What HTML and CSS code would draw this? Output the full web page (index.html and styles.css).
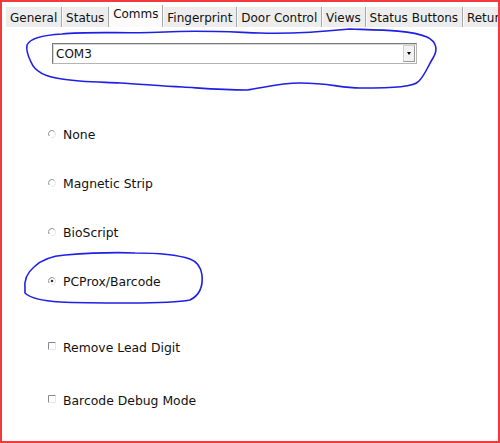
FILE: index.html
```html
<!DOCTYPE html>
<html lang="en">
	<head>
		<meta charset="UTF-8" />
		<title>Comms</title>
		<link rel="stylesheet" href="styles.css">
	</head>
	<body>
		<div class="frame">
			<div class="tabs">
				<div class="tab">General</div>
				<div class="tab">Status</div>
				<div class="tab active">Comms</div>
				<div class="tab">Fingerprint</div>
				<div class="tab">Door Control</div>
				<div class="tab">Views</div>
				<div class="tab">Status Buttons</div>
				<div class="tab last">Return</div>
			</div>

			<div class="content">
				<div class="combo-row">
					<div class="combo">
						<span class="combo-value">COM3</span>
						<span class="combo-btn"><span class="arrow"></span></span>
					</div>
				</div>

				<div class="options">
					<label class="option opt-none">
						<svg class="radio" width="8" height="8" viewBox="0 0 8 8"><path d="M1.2 6 A3 3 0 0 1 6.5 1.8" fill="none" stroke="#8c8c8c" stroke-width="1"/><path d="M6.6 2.2 A3 3 0 0 1 3 7" fill="none" stroke="#e4e4e4" stroke-width="1"/></svg>
						<span>None</span>
					</label>
					<label class="option">
						<svg class="radio" width="8" height="8" viewBox="0 0 8 8"><path d="M1.2 6 A3 3 0 0 1 6.5 1.8" fill="none" stroke="#8c8c8c" stroke-width="1"/><path d="M6.6 2.2 A3 3 0 0 1 3 7" fill="none" stroke="#e4e4e4" stroke-width="1"/></svg>
						<span>Magnetic Strip</span>
					</label>
					<label class="option">
						<svg class="radio" width="8" height="8" viewBox="0 0 8 8"><path d="M1.2 6 A3 3 0 0 1 6.5 1.8" fill="none" stroke="#8c8c8c" stroke-width="1"/><path d="M6.6 2.2 A3 3 0 0 1 3 7" fill="none" stroke="#e4e4e4" stroke-width="1"/></svg>
						<span>BioScript</span>
					</label>
					<label class="option">
						<svg class="radio" width="8" height="8" viewBox="0 0 8 8"><path d="M1.2 6 A3 3 0 0 1 6.5 1.8" fill="none" stroke="#8c8c8c" stroke-width="1"/><path d="M6.6 2.2 A3 3 0 0 1 3 7" fill="none" stroke="#e4e4e4" stroke-width="1"/><circle cx="4" cy="4" r="1.3" fill="#333"/></svg>
						<span>PCProx/Barcode</span>
					</label>
					<label class="option opt-check">
						<svg class="check" width="8" height="8" viewBox="0 0 8 8"><path d="M0.5 7.5 V0.5 H7.5" fill="none" stroke="#8a8a8a" stroke-width="1"/><path d="M7.5 1 V7.5 H1" fill="none" stroke="#e8e8e8" stroke-width="1"/></svg>
						<span>Remove Lead Digit</span>
					</label>
					<label class="option opt-debug">
						<svg class="check" width="8" height="8" viewBox="0 0 8 8"><path d="M0.5 7.5 V0.5 H7.5" fill="none" stroke="#8a8a8a" stroke-width="1"/><path d="M7.5 1 V7.5 H1" fill="none" stroke="#e8e8e8" stroke-width="1"/></svg>
						<span>Barcode Debug Mode</span>
					</label>
				</div>
			</div>

			<!-- hand drawn marks on top of the screenshot -->
			<svg class="marks" width="500" height="443" viewBox="0 0 500 443">
				<path d="M27 45 C30 38 45 35 62 34 C90 31 130 34 165 32 C200 30 230 32 260 33 C290 34 320 32 350 29 C380 30 410 30 427 37 C437 42 438 50 433 58 C428 66 425 75 419 81 C414 87 395 88 360 88 C340 88 330 83 300 83 C280 83 262 88 247 90 C220 90 200 88 183 87 C160 86 140 84 120 83 C100 82 80 82 62 79 C45 77 35 72 31 62 C28 56 26 50 27 45 Z" fill="none" stroke="#1f1fe6" stroke-width="1.6"/>
				<path d="M25 289 C24 280 28 272 34 267 C42 259 52 256 65 255 C90 253 115 252 135 253 C160 253 178 255 190 259 C198 262 201 267 202 275 C203 285 200 295 190 300 C175 303 150 303 130 303 C105 303 80 303 60 302 C45 301 30 298 25 293 Z" fill="none" stroke="#1f1fe6" stroke-width="1.6"/>
			</svg>
		</div>
	</body>
</html>
```

FILE: styles.css
```css
* {
	box-sizing: border-box;
}
body {
	margin: 0;
	font-family: 'DejaVu Sans', sans-serif;
	font-size: 12px;
	color: #111;
	background: #fff;
}
.frame {
	position: relative;
	width: 500px;
	height: 443px;
	border: 2px solid #f23a3a;
	padding: 5px 0 0 4px;
	background: #fff;
	overflow: hidden;
}
.tabs {
	display: flex;
	height: 20px;
	background: #ededed;
	white-space: nowrap;
}
.tab {
	display: flex;
	align-items: center;
	height: 20px;
	padding: 1px 3.8px 0 3px;
	border-right: 1px solid #a8a8a8;
	box-shadow: 1px 0 0 #fafafa;
	margin-right: 1px;
}
.tab:first-child {
	padding-left: 4px;
}
.tab.active {
	background: #fbfbfb;
	margin-top: -2px;
	height: 22px;
	padding-top: 0;
	padding-bottom: 4px;
}
.tab.last {
	border-right: none;
}
.content {
	padding-top: 16px;
}
.combo-row {
	padding-left: 46px;
}
.combo {
	display: flex;
	align-items: center;
	width: 365px;
	height: 21px;
	background: #fff;
	border: 1px solid #b4b4b4;
	border-top-color: #7a7a7a;
	border-left-color: #7a7a7a;
	box-shadow: inset 1px 1px 0 #d8d8d8;
	padding: 0 1px 0 3px;
}
.combo-value {
	flex: 1;
	padding-top: 1px;
}
.combo-btn {
	display: flex;
	align-items: center;
	justify-content: center;
	width: 12px;
	height: 17px;
	background: #f2f2f2;
	border: 1px solid #d0d0d0;
	border-right-color: #999;
	border-bottom-color: #999;
}
.arrow {
	width: 0;
	height: 0;
	border-left: 2.5px solid transparent;
	border-right: 2.5px solid transparent;
	border-top: 3px solid #000;
}
.options {
	display: flex;
	flex-direction: column;
	padding-left: 42px;
	font-size: 12.4px;
}
.option {
	display: flex;
	align-items: center;
	height: 16px;
	margin-top: 33px;
}
.option.opt-none {
	margin-top: 62px;
}
.option.opt-check {
	margin-top: 50px;
}
.option.opt-debug {
	margin-top: 37px;
}
.radio,
.check {
	flex: none;
	margin-right: 7px;
}
.check {
	margin-top: -2px;
}
.marks {
	position: absolute;
	left: -2px;
	top: -2px;
	pointer-events: none;
}
```
